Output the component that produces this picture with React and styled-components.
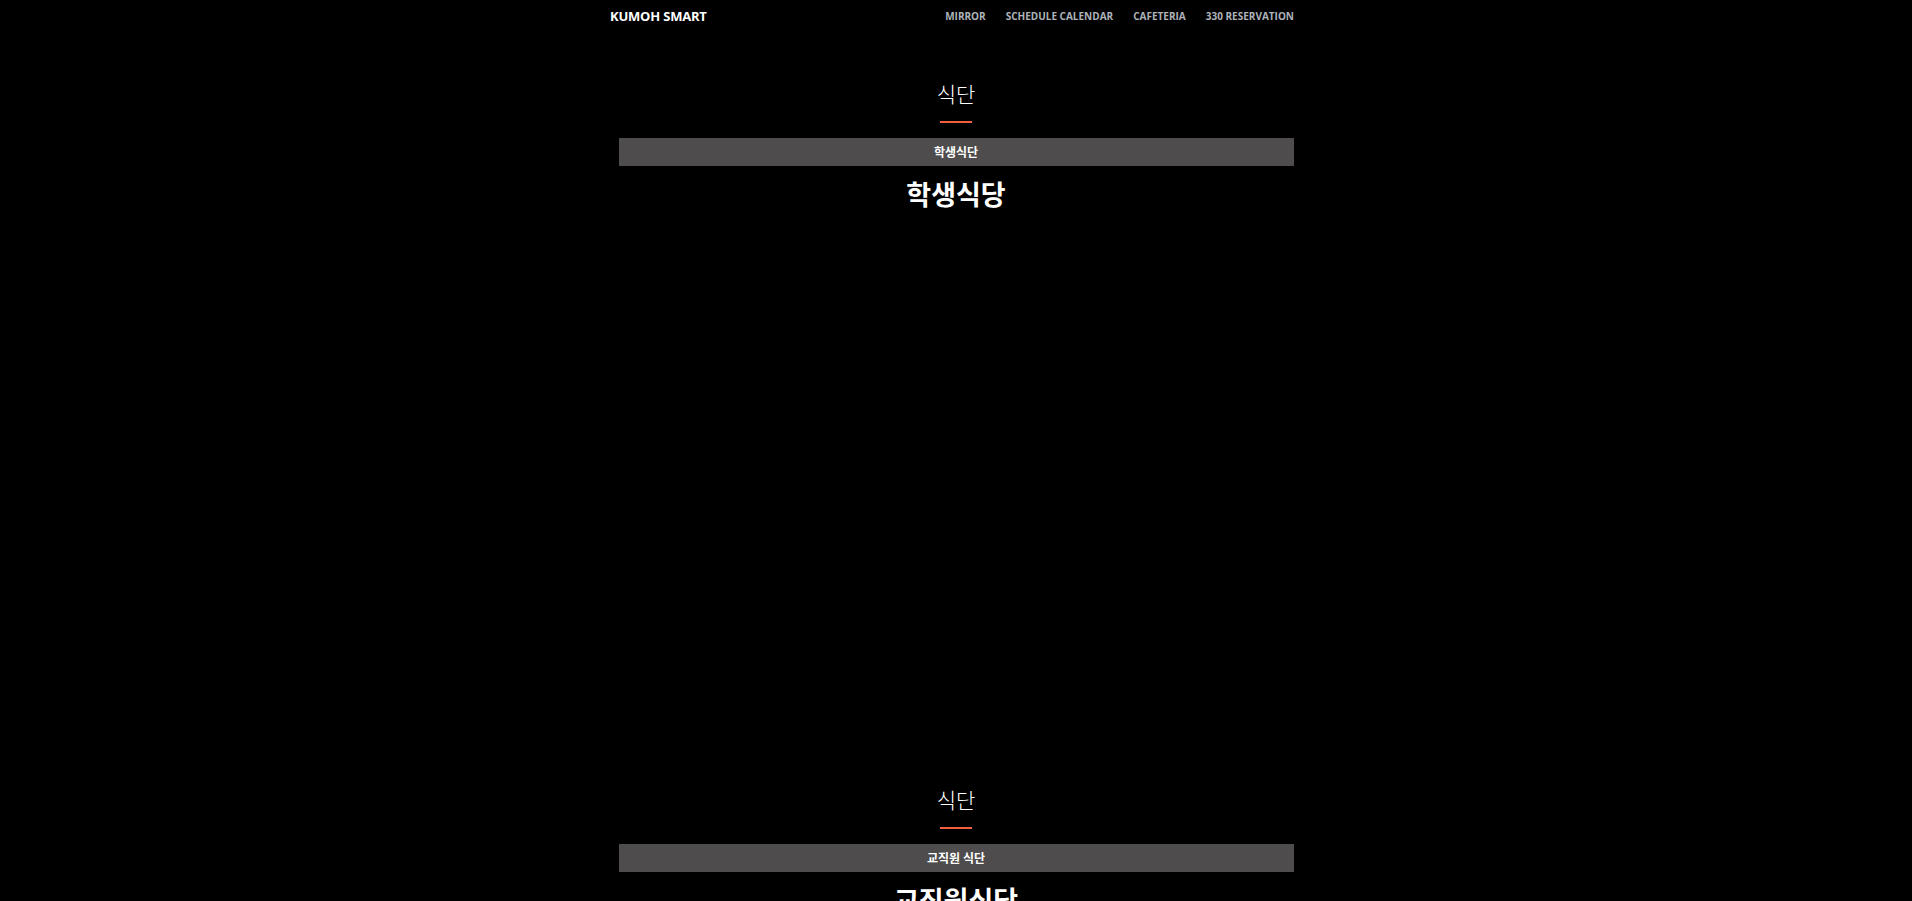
import React from 'react';
import styled, { createGlobalStyle } from 'styled-components';

const GlobalStyle = createGlobalStyle`
  html, body {
    margin: 0;
    padding: 0;
    background-color: #000;
  }

  body {
    font-family: "Open Sans", "Noto Sans CJK KR", sans-serif;
    color: #fff;
  }
`;

const NavBar = styled.nav`
  height: 32px;
  display: flex;
  align-items: center;
`;

const NavInner = styled.div`
  width: 684px;
  margin-left: calc(50% - 346px);
  display: flex;
  align-items: center;
  justify-content: space-between;
`;

const Brand = styled.a`
  font-family: "Open Sans", sans-serif;
  font-size: 13px;
  font-weight: 700;
  line-height: 18px;
  color: #fff;
  text-transform: uppercase;
  text-decoration: none;
  letter-spacing: -0.2px;
`;

const NavLinks = styled.ul`
  display: flex;
  align-items: center;
  gap: 20px;
  list-style: none;
  margin: 0;
  padding: 0;
  font-size: 10px;
  line-height: 18px;

  a {
    display: block;
    font-family: "Open Sans", sans-serif;
    font-size: 10px;
    font-weight: 700;
    line-height: 18px;
    color: #adb3b9;
    text-transform: uppercase;
    text-decoration: none;
  }
`;

const Section = styled.section`
  width: 675px;
  margin: 0 auto;
  padding-top: 47px;
  text-align: center;
  font-family: "Noto Sans CJK KR", sans-serif;
`;

const Title = styled.h2`
  margin: 0;
  font-size: 21px;
  font-weight: 300;
  line-height: 28px;
  color: #fff;
`;

const Divider = styled.hr`
  width: 32px;
  height: 2px;
  margin: 14px auto 0;
  border: 0;
  background-color: #f05f40;
`;

const TabBar = styled.div`
  margin-top: 15px;
  height: 28px;
  line-height: 28px;
  background-color: #4e4c4d;
  font-size: 12px;
  font-weight: 700;
  color: #fff;
`;

const Cafeteria = styled.h3`
  margin: 10px 0 0;
  font-size: 27px;
  font-weight: 700;
  line-height: 36px;
  color: #fff;
`;

const MenuBody = styled.div`
  min-height: ${(p) => p.$height}px;
`;

const sections = [
  { tab: '학생식단', name: '학생식당', height: 526 },
  { tab: '교직원 식단', name: '교직원식당', height: 526 },
];

function App() {
  return (
    <>
      <GlobalStyle />
      <NavBar>
        <NavInner>
          <Brand href="#">Kumoh Smart</Brand>
          <NavLinks>
            <li><a href="#">Mirror</a></li>
            <li><a href="#">Schedule Calendar</a></li>
            <li><a href="#">Cafeteria</a></li>
            <li><a href="#">330 Reservation</a></li>
          </NavLinks>
        </NavInner>
      </NavBar>
      {sections.map((s) => (
        <Section key={s.name}>
          <Title>식단</Title>
          <Divider />
          <TabBar>{s.tab}</TabBar>
          <Cafeteria>{s.name}</Cafeteria>
          <MenuBody $height={s.height} />
        </Section>
      ))}
    </>
  );
}

export default App;
